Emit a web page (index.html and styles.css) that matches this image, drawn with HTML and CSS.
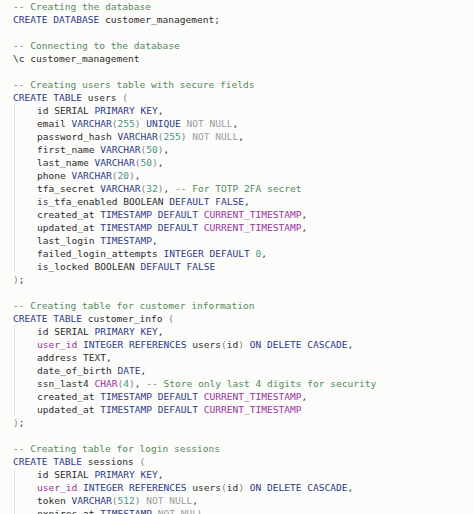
FILE: index.html
```html
<!DOCTYPE html>
<html>
<head>
<meta charset="utf-8">
<link rel="stylesheet" href="styles.css">
</head>
<body>
<div class="code">
<div class="ln"><span class="c">-- Creating the database</span></div>
<div class="ln"><span class="k">CREATE DATABASE</span> customer_management;</div>
<div class="ln"> </div>
<div class="ln"><span class="c">-- Connecting to the database</span></div>
<div class="ln">\c customer_management</div>
<div class="ln"> </div>
<div class="ln"><span class="c">-- Creating users table with secure fields</span></div>
<div class="ln"><span class="k">CREATE TABLE</span> users <span class="p">(</span></div>
<div class="block">
<div class="ln">id SERIAL <span class="k">PRIMARY KEY</span>,</div>
<div class="ln">email <span class="k">VARCHAR</span><span class="p">(</span><span class="n">255</span><span class="p">)</span> <span class="k">UNIQUE</span> <span class="g">NOT NULL</span>,</div>
<div class="ln">password_hash <span class="k">VARCHAR</span><span class="p">(</span><span class="n">255</span><span class="p">)</span> <span class="g">NOT NULL</span>,</div>
<div class="ln">first_name <span class="k">VARCHAR</span><span class="p">(</span><span class="n">50</span><span class="p">)</span>,</div>
<div class="ln">last_name <span class="k">VARCHAR</span><span class="p">(</span><span class="n">50</span><span class="p">)</span>,</div>
<div class="ln">phone <span class="k">VARCHAR</span><span class="p">(</span><span class="n">20</span><span class="p">)</span>,</div>
<div class="ln">tfa_secret <span class="k">VARCHAR</span><span class="p">(</span><span class="n">32</span><span class="p">)</span>, <span class="c">-- For TOTP 2FA secret</span></div>
<div class="ln">is_tfa_enabled BOOLEAN <span class="k">DEFAULT FALSE</span>,</div>
<div class="ln">created_at <span class="k">TIMESTAMP DEFAULT</span> <span class="m">CURRENT_TIMESTAMP</span>,</div>
<div class="ln">updated_at <span class="k">TIMESTAMP DEFAULT</span> <span class="m">CURRENT_TIMESTAMP</span>,</div>
<div class="ln">last_login <span class="k">TIMESTAMP</span>,</div>
<div class="ln">failed_login_attempts <span class="k">INTEGER DEFAULT</span> <span class="n">0</span>,</div>
<div class="ln">is_locked BOOLEAN <span class="k">DEFAULT FALSE</span></div>
</div>
<div class="ln"><span class="p">)</span>;</div>
<div class="ln"> </div>
<div class="ln"><span class="c">-- Creating table for customer information</span></div>
<div class="ln"><span class="k">CREATE TABLE</span> customer_info <span class="p">(</span></div>
<div class="block">
<div class="ln">id SERIAL <span class="k">PRIMARY KEY</span>,</div>
<div class="ln"><span class="m">user_id</span> <span class="k">INTEGER REFERENCES</span> users<span class="p">(</span>id<span class="p">)</span> <span class="k">ON DELETE CASCADE</span>,</div>
<div class="ln">address TEXT,</div>
<div class="ln">date_of_birth <span class="k">DATE</span>,</div>
<div class="ln">ssn_last4 <span class="m">CHAR</span><span class="p">(</span><span class="n">4</span><span class="p">)</span>, <span class="c">-- Store only last 4 digits for security</span></div>
<div class="ln">created_at <span class="k">TIMESTAMP DEFAULT</span> <span class="m">CURRENT_TIMESTAMP</span>,</div>
<div class="ln">updated_at <span class="k">TIMESTAMP DEFAULT</span> <span class="m">CURRENT_TIMESTAMP</span></div>
</div>
<div class="ln"><span class="p">)</span>;</div>
<div class="ln"> </div>
<div class="ln"><span class="c">-- Creating table for login sessions</span></div>
<div class="ln"><span class="k">CREATE TABLE</span> sessions <span class="p">(</span></div>
<div class="block">
<div class="ln">id SERIAL <span class="k">PRIMARY KEY</span>,</div>
<div class="ln"><span class="m">user_id</span> <span class="k">INTEGER REFERENCES</span> users<span class="p">(</span>id<span class="p">)</span> <span class="k">ON DELETE CASCADE</span>,</div>
<div class="ln">token <span class="k">VARCHAR</span><span class="p">(</span><span class="n">512</span><span class="p">)</span> <span class="g">NOT NULL</span>,</div>
<div class="ln">expires_at <span class="k">TIMESTAMP</span> <span class="g">NOT NULL</span>,</div>
</div>
</div>
</body>
</html>
```
FILE: styles.css
```css
html, body {
  margin: 0;
  padding: 0;
  background: #fcfcfa;
  overflow: hidden;
}
.code {
  padding: 0 0 0 13px;
  font-family: "DejaVu Sans Mono", "Liberation Mono", monospace;
  font-size: 9.55px;
  line-height: 13px;
  color: #2c2c2c;
}
.ln {
  height: 13px;
  white-space: pre;
}
.block {
  margin-left: 1px;
  padding-left: 22px;
  border-left: 1px solid #e3e3e1;
}
.c { color: #558a5a; }
.k { color: #2d3a88; }
.p { color: #858585; }
.n { color: #449884; }
.g { color: #9c9c9c; }
.m { color: #9a32a3; }
```
